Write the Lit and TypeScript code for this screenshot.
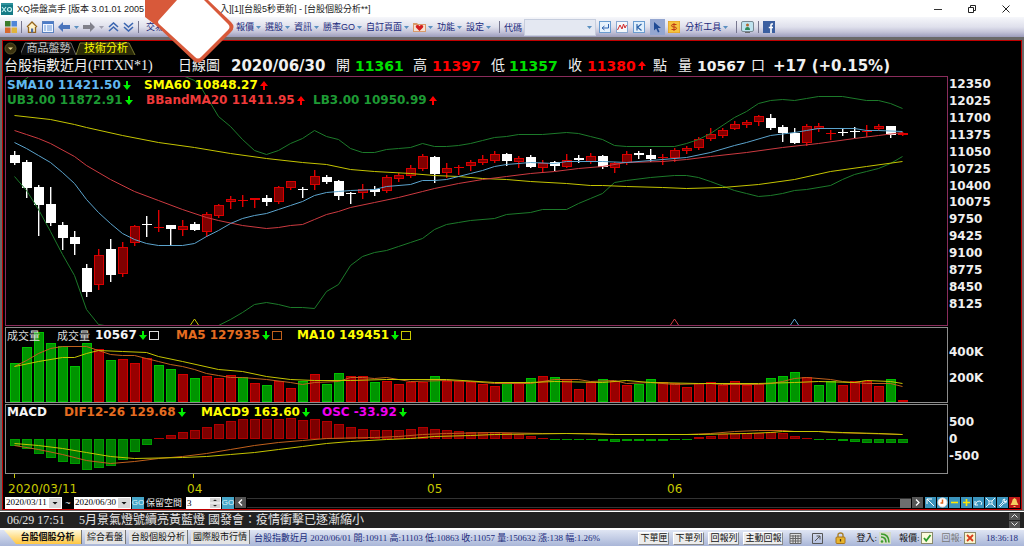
import { LitElement, html, svg, css } from "lit";
import { customElement, property } from "lit/decorators.js";

type Candle = [string, number, number, number, number];
type Bar = [string, number];
type Pt = [number, number];

const STEP = 12;
const mid = (i: number) => 9.5 + i * STEP;
const parsePts = (s: string): Pt[] => s.trim().split(/\s+/).map((p) => p.split(":").map(Number) as unknown as Pt);
const parseBars = (s: string): Bar[] => s.trim().split(/\s+/).map((p) => [p[0], Number(p.slice(1))] as Bar);

// colour, high, body top, body bottom, low
const CANDLES: Candle[] = `w75,79,87,88 w84,86,112,121 w109,111,129,159 w111,128,147,149 w146,149,162,173 w155,161,168,178
w188,192,216,220 r173,179,209,213 w163,173,199,205 r166,171,198,200 r149,150,167,169 w140,148,149,160 r134,151,152,155
w149,149,153,169 r144,150,154,159 w146,148,154,154 r136,138,156,160 r128,129,140,141 r120,123,126,132 r119,124,125,130
r122,122,124,131 w119,122,126,129 r110,111,126,127 r105,105,112,113 w111,113,114,121 r94,100,109,113 w99,101,106,107
w104,105,120,123 w116,117,118,127 r108,113,117,122 w110,113,116,119 r99,101,115,116 r97,99,103,105 r89,92,100,101
r78,80,93,94 w80,81,98,106 r87,92,97,101 r89,91,92,98 r84,86,90,94 r79,83,87,88 r75,78,85,86 w77,78,85,89 r80,82,86,91
w79,81,91,91 r84,87,92,96 w85,86,90,94 r78,84,91,91 w79,82,84,86 r77,80,86,87 w79,80,91,92 r86,87,92,96 r75,78,87,88
w75,77,79,82 w73,79,83,85 r78,81,82,88 r72,74,82,85 r70,72,75,77 r61,63,72,73 r52,58,63,64 r52,54,60,61 r45,48,53,53
r44,46,49,51 r39,40,46,49 w38,42,52,53 w49,51,57,65 w52,57,67,67 r48,50,67,69 r47,50,53,55 r54,57,58,63 w53,56,57,59
w51,55,56,61 r49,55,56,60 r48,50,53,54 w50,50,59,61 r56,57,59,59`
  .split(/\s+/)
  .map((s) => [s[0], ...s.slice(1).split(",").map(Number)] as Candle);

const SMA60 = parsePts("0:39 3:43 5:48 6:51 9:59 12:66 15:71 18:77 21:82 24:86 26:88 28:93 30:95 33:97 35:99 37:100 39:102 41:103 43:105 46:107 48:109 49:109 51:110 54:111 56:112 59:111 62:108 65:103 68:95 71:90 74:85");
const SMA20 = parsePts("0:54 1:58 2:62 3:67 5:80 6:89 8:103 10:115 12:124 14:133 16:141 17:144 19:149 21:152 22:151 23:149 24:148 25:143 26:138 27:135 28:131 30:126 32:121 34:115 35:112 37:107 39:103 41:100 43:97 45:95 47:92 49:90 51:86 54:85 56:83 58:80 61:76 64:71 67:67 70:62 72:59 74:56");
const SMA10 = parsePts("0:66 1:72 2:79 3:86 4:96 5:107 6:123 7:136 8:147 9:157 10:163 11:167 12:169 14:169 15:167 16:160 17:154 18:147 19:142 20:139 21:137 22:133 23:129 24:125 25:119 26:116 27:115 28:114 30:113 31:110 33:108 34:104 35:104 36:103 37:100 38:97 39:94 40:90 41:88 42:87 43:86 45:87 46:85 49:85 51:86 54:83 56:81 58:76 60:69 61:66 63:59 65:56 66:54 67:52 70:52 71:54 72:54 74:55");
const UPPER = parsePts("14.2:0 15:4 15.6:12 16.2:24 17:40 18:50 19:63 20:74 21:78 22:74 23:67 24:62 25:54 26:60 27:63 28:72 29:76 30:76 31:73 32:72 33:71 34:67 35:70 36:70 37:69 38:67 39:64 40:61 41:60 42:58 44:58 46:56 47:57 48:60 49:63 50:69 51:70 55:70 56:67 57:63 58:57 60:41 61:35 62:27 63:24 64:23 65:24 66:22 67:20 69:20 71:24 72:24 73:27 74:32");
const UPPER_LEFT = parsePts("0:11 1.2:0");
const LOWER = parsePts("0:100 1:114 2:133 3:155 4:178 5:199 6:233 7:248 7.5:249 17:249 18:243 19:236 20:228 21:226 22:228 23:231 24:231 25:232 26:215 27:208 28:189 29:180 30:176 31:174 32:170 33:166 34:162 35:153 36:148 37:146 38:144 40:142 41:138 43:136 44:133 46:133 47:127 48:122 49:117 50:106 51:104 53:101 55:99 56:99 57:101 58:105 60:114 61:117 62:120 63:119 64:117 65:114 66:113 68:109 69:103 70:98 71:95 72:92 73:87 74:80");

const VOLUME = parseBars("g36 g20 g5 g16 g19 g39 g16 r22 g33 r32 r36 r31 g38 g42 r47 g51 r49 r51 r48 g50 r56 g58 r54 r61 g54 r47 g57 g46 r49 r49 g55 r54 r57 r55 r55 g49 r54 r54 r55 r57 r59 g55 r56 g51 r49 g50 r52 r62 r55 g52 r54 r58 g57 g52 r55 r56 r60 r56 r55 r58 r54 r58 r57 g51 g49 g45 r50 g58 g54 r58 r54 r54 r59 g52 r73");
const VMA5 = parsePts("0:39 1:33 2:26 3:21 4:19 6:19 7:23 8:27 9:28 10:28 11:31 12:34 13:37 14:39 15:42 16:46 17:48 18:50 19:50 21:52 23:55 24:57 25:55 27:54 28:50 29:50 30:51 31:50 32:52 33:54 36:53 38:54 40:56 43:56 45:52 47:52 48:54 50:53 51:56 53:55 55:57 58:56 59:57 62:57 63:56 64:54 65:51 66:50 68:52 69:54 71:56 73:56 74:59");
const VMA10 = parsePts("0:39 2:34 4:30 5:30 6:26 7:23 9:24 11:25 12:29 14:34 17:42 19:44 21:49 23:52 25:53 28:53 31:52 36:52 40:55 43:55 45:54 49:55 51:53 53:55 57:56 62:56 65:55 67:54 70:55 71:53 73:54 74:56");

const OSC = parseBars("g42 g45 g50 g54 g58 g60 g66 g64 g62 g56 g48 g41 r34 r31 r28 r26 r23 r20 r17 r15 r15 r15 r15 r14 r16 r15 r17 r20 r23 r25 r26 r26 r26 r25 r23 r25 r26 r27 r28 r28 r28 r29 r30 r32 r34 g36 g36 g36 g36 g37 g38 g37 g37 g37 g37 g36 g36 r33 r32 r30 r29 r29 r29 r28 r29 r32 r34 g36 g36 g37 g38 g39 g39 g39 g39");
const DIF = parsePts("0:41 2:45 4:50 6:56 8:59 10:57 12:54 14:52 16:49 18:45 20:41 22:38 24:36 26:34 30:33 32:32 34:30 36:29 40:28 44:29 48:29 50:30 56:30 58:29 60:27 62:26 64:26 65:27 67:27 68:28 71:29 74:30");
const MACD9 = parsePts("0:39 2:41 4:44 6:48 8:52 10:54 14:53 16:52 18:50 20:48 22:45 24:42 26:39 28:37 31:35 33:34 35:32 38:31 40:30 46:29 50:30 57:30 61:29 63:28 64:27 67:27 69:28 72:29 74:30");

const line = (pts: Pt[], cls: string) =>
  svg`<polyline class="line ${cls}" points=${pts.map(([i, y]) => `${mid(i)},${y + 0.5}`).join(" ")}></polyline>`;

const down = (cls = "") => html`<svg class="arr ${cls}" width="8" height="9" viewBox="0 0 8 9"><path fill="#00f000" d="M3 0H5V4H8L4 9 0 4H3Z"/></svg>`;
const up = () => html`<svg class="arr" width="8" height="9" viewBox="0 0 8 9"><path fill="#ff0000" d="M3 9H5V5H8L4 0 0 5H3Z"/></svg>`;
const box = (c: string) => html`<svg class="box" width="10" height="9" viewBox="0 0 10 9"><rect x=".5" y=".5" width="9" height="8" fill="none" stroke=${c}/></svg>`;

@customElement("price-chart")
export class PriceChart extends LitElement {
  @property() kind = "price";

  static styles = css`
    :host { display: block; }
    .plot { display: block; width: 100%; height: 100%; }
    .line { fill: none; stroke-width: 1; }
    .yellow { stroke: #c4c400; }
    .red { stroke: #cc3a40; }
    .blue { stroke: #5ba3cc; }
    .green { stroke: #1c7a2a; }
    .orange { stroke: #c0601c; }
  `;

  private candle([c, hi, top, bot, lo]: Candle, i: number) {
    const x = 5 + i * STEP;
    const flat = bot - top < 3;
    return svg`
      <rect x=${x + 4} y=${hi} width="1" height=${lo - hi + 1} fill=${c === "w" ? "#fff" : "#e00000"}></rect>
      <rect x=${x + 5} y=${hi} width="1" height=${lo - hi + 1} fill=${c === "w" ? "#fff" : "#e00000"} opacity=".4"></rect>
      ${c === "w" || flat
        ? svg`<rect x=${x} y=${top} width="10" height=${Math.max(bot - top, 1)} fill=${c === "w" ? "#fff" : "#e00000"}></rect>`
        : svg`<rect x=${x + 0.5} y=${top + 0.5} width="9" height=${bot - top - 1} fill="#800000" stroke="#d80000"></rect>`}`;
  }

  private bar(c: string, i: number, y0: number, y1: number, dim: boolean) {
    const h = Math.abs(y1 - y0);
    const fill = c === "g" ? (dim ? "#007c00" : "#009400") : dim ? "#7c0000" : "#980000";
    const edge = c === "g" ? (dim ? "#009c00" : "#00c000") : dim ? "#b00000" : "#d00000";
    const x = 5 + i * STEP;
    const y = Math.min(y0, y1);
    return h < 3
      ? svg`<rect x=${x} y=${y} width="10" height=${h} fill=${edge}></rect>`
      : svg`<rect x=${x + 0.5} y=${y + 0.5} width="9" height=${h - 1} fill=${fill} stroke=${edge}></rect>`;
  }

  render() {
    if (this.kind === "volume")
      return html`<svg class="plot">${VOLUME.map(([c, y], i) => this.bar(c, i, y, 75, false))}${line(VMA5, "orange")}${line(VMA10, "yellow")}</svg>`;
    if (this.kind === "macd")
      return html`<svg class="plot">${OSC.map(([c, y], i) => this.bar(c, i, 35, y, true))}${line(DIF, "orange")}${line(MACD9, "yellow")}</svg>`;
    const mark = (i: number, cls: string) => svg`<path class="line ${cls}" d="M${mid(i) - 4} 249l4-6 4 6"></path>`;
    return html`<svg class="plot">
      ${CANDLES.map((c, i) => this.candle(c, i))}
      ${line(UPPER_LEFT, "green")}${line(UPPER, "green")}${line(LOWER, "green")}
      ${line(SMA60, "yellow")}${line(SMA20, "red")}${line(SMA10, "blue")}
      ${mark(15, "yellow")}${mark(55, "red")}${mark(65, "blue")}
    </svg>`;
  }
}

const caret = html`<svg class="caret" width="5" height="3" viewBox="0 0 5 3"><path fill="#5a8fc0" d="M0 0H5L2.5 3Z"/></svg>`;
const menu = (t: string) => html`<button class="menu">${t}${caret}</button>`;

@customElement("app-root")
export class AppRoot extends LitElement {
  static styles = css`
    :host { display: block; min-height: 100vh; background: #f4f4f4; font-family: "Liberation Sans", "Noto Sans CJK TC", sans-serif; font-size: 9px; }
    * { box-sizing: border-box; }
    button, select, input { font: inherit; color: inherit; margin: 0; padding: 0; border: 0; border-radius: 0; background: none; }
    button { display: inline-flex; align-items: center; justify-content: center; white-space: nowrap; }
    select { appearance: none; }
    svg { display: block; flex: none; }
    .page { position: relative; display: flex; flex-direction: column; overflow: hidden; }
    .splash { position: absolute; left: 144px; top: 0; }

    .title { display: flex; align-items: center; height: 17px; background: #fff; color: #222; padding-left: 1px; line-height: 16px; white-space: nowrap; }
    .title .name { margin-left: 4px; width: 203px; overflow: hidden; }
    .wins { margin-left: auto; display: flex; align-items: center; gap: 26px; padding-right: 14px; }

    .tools { display: flex; align-items: center; height: 20px; padding-left: 5px; color: #1c2a7c; background: linear-gradient(#f6f7fb, #dfe0ec 50%, #c3c3d8 75%, #9c9cbc); white-space: nowrap; }
    .quick { display: flex; align-items: center; gap: 4px; width: 141px; }
    .trade { width: 86px; justify-content: flex-start; }
    .menu { gap: 2px; margin-right: 4px; line-height: 16px; }
    .sep { width: 1px; height: 12px; background: #77778f; margin: 0 4px; }
    .code { width: 72px; height: 17px; background: #e4e8f2; border: 1px solid #c6cddd; }
    .combo { position: relative; display: flex; margin: 0 3px 0 2px; }
    .combo .caret { position: absolute; right: 4px; top: 7px; pointer-events: none; }
    .ibtn { width: 12px; height: 12px; margin-right: 5px; }
    .pick { width: 15px; height: 16px; background: #94a6d0; margin-right: 3px; }

    .shell { background: #696969; padding: 3px 2px 1px; }
    .frame { border: 1px solid #c00000; background: #000; color: #f0f0f0; }
    .tabs { display: flex; align-items: flex-end; height: 14px; font-size: 11px; }
    .round { width: 18px; }
    .tab { position: relative; height: 13px; line-height: 13px; color: #c8c8c8; width: 55px; }
    .tab.on { color: #ffff00; width: 60px; }
    .tab .shape { position: absolute; left: 0; top: 0; }
    .tab span { position: relative; }
    .head { display: grid; grid-template-columns: 174px 53px 105px 19px 58px 19px 59px 18px 59px 19px 51px 15px 25px 19px 54px 22px 1fr; align-items: center; height: 21px; padding-left: 1px; font-size: 14px; font-family: "Liberation Serif", "Noto Sans CJK TC", serif; white-space: nowrap; line-height: 20px; }
    .num { font-family: "DejaVu Sans", sans-serif; font-weight: 700; }
    .big { font-size: 15px; }
    .up { color: #ff0000; }
    .dn { color: #00e000; }
    .charts { display: grid; grid-template-columns: minmax(0, 1fr) 73px; row-gap: 1px; padding-left: 2px; }
    .pane { position: relative; outline: 1px solid #8c8c8c; outline-offset: -1px; overflow: hidden; }
    .pane.price { height: 250px; outline-color: #8a2c5c; }
    .pane.volume { height: 76px; }
    .pane.macd { height: 70px; }
    .pane price-chart { height: 100%; }
    .legend { position: absolute; left: 2px; top: 1px; display: grid; font: 700 12px/15px "DejaVu Sans", "Noto Sans CJK TC", sans-serif; white-space: nowrap; }
    .legend > span { display: flex; align-items: center; gap: 2px; }
    .legend .cjk { font: 400 11px/15px "Noto Sans CJK TC", sans-serif; color: #ddd; }
    .l1 { grid-template-columns: 137px 1fr; top: 2px; }
    .l2 { grid-template-columns: 139px 167px 1fr; top: 17px; }
    .l3 { grid-template-columns: 50px 38px 81px 121px 1fr; }
    .l4 { grid-template-columns: 57px 137px 121px 1fr; }
    .axis { display: flex; flex-direction: column; padding-left: 1px; font: 700 12px/16px "DejaVu Sans", sans-serif; }
    .axis.a1 { justify-content: space-between; padding-bottom: 14px; }
    .axis.a2 { padding-top: 17px; gap: 10px; }
    .axis.a3 { padding-top: 10px; gap: 1px; }
    .c-blue { color: #62b8f0; } .c-yellow { color: #ffff00; } .c-green { color: #1e9a34; } .c-red { color: #f03a3a; }
    .c-orange { color: #e46c20; } .c-mag { color: #f000f0; } .c-white { color: #f4f4f4; }
    .time { display: grid; grid-template-columns: 179px 240px 240px 1fr; height: 22px; padding-left: 5px; color: #c8c800; font: 12px/14px "DejaVu Sans", sans-serif; }
    .time span::before { content: ""; display: block; width: 1px; height: 4px; margin: 0 0 4px 6px; background: #c8c800; }

    .foot { display: flex; align-items: center; height: 13px; padding-left: 2px; }
    .date { position: relative; display: flex; }
    .date select { width: 57px; height: 12px; background: #fff; color: #000; font: 9px/11px "Liberation Serif", serif; padding-left: 1px; }
    .date .drop { position: absolute; right: 1px; top: 1px; pointer-events: none; }
    .tilde { width: 12px; text-align: center; line-height: 12px; }
    .go { width: 12px; height: 12px; background: #46a5c8; color: #dff2fa; font-size: 8px; margin-left: 1px; }
    .keep { font-size: 9px; line-height: 12px; margin-left: 2px; width: 40px; white-space: nowrap; }
    .spin { position: relative; display: flex; }
    .spin input { width: 35px; height: 12px; background: #fff; color: #000; font: 9px/10px "Liberation Serif", serif; padding-left: 1px; }
    .spin svg { position: absolute; right: 1px; top: 1px; pointer-events: none; }
    .nav { width: 11px; height: 11px; background: #555; margin-left: 1px; }
    .track { flex: 1; height: 10px; border-top: 1px solid #333; border-bottom: 1px solid #333; margin-left: 1px; display: flex; justify-content: flex-end; }
    .thumb { width: 11px; height: 9px; background: #6e6e6e; }
    .blue { width: 11px; height: 11px; background: #3b94bd; margin-left: 1px; }
    .first { margin-left: 2px; }
    .bell { background: #c01818; margin-right: 1px; }

    .news { display: flex; align-items: center; height: 17px; border-top: 1px solid #fff; background: #222; color: #e4e4e4; font: 12px/16px "Liberation Serif", "Noto Sans CJK TC", serif; padding: 0 4px 0 7px; }
    .news .when { width: 72px; }
    .news .updown { margin-left: auto; display: flex; flex-direction: column; gap: 1px; }
    .updown button { width: 11px; height: 7px; background: #555; }
    .status { display: flex; align-items: center; height: 18px; border-top: 2px solid #fff; background: linear-gradient(#dfe5f3, #a9b6d8); color: #1c2c7c; font: 9px/14px "Liberation Serif", "Noto Sans CJK TC", serif; white-space: nowrap; }
    .sheet { height: 14px; background: #e4e4e4; color: #111; padding: 0 2px; border-right: 1px solid #777; margin-right: 3px; align-self: flex-start; }
    .sheet.on { background: linear-gradient(#fff8d8, #ffc640); font-weight: 700; clip-path: polygon(0 0, 100% 0, 100% 100%, 12px 100%); width: 78px; margin-left: 4px; padding: 0 0 0 10px; }
    .info { margin-left: 1px; }
    .right { margin-left: auto; display: flex; align-items: center; padding-right: 6px; color: #111; }
    .push { height: 13px; padding: 0 1px; margin-right: 4px; background: #ececec; border: 1px solid #fff; border-right-color: #888; border-bottom-color: #888; }
    .cal { margin: 0 10px 0 2px; } .pop { margin-right: 12px; } .lock { margin-right: 10px; }
    .tag { margin-right: 2px; } .off { color: #777; }
    .sig { margin-right: 8px; }
    .clock { color: #1c2c7c; margin-left: 2px; }
  `;

  render() {
    const axis = Array.from({ length: 14 }, (_, i) => 12350 - i * 325);
    return html`<div class="page">
      <header class="title">
        <svg width="12" height="12" viewBox="0 0 12 12"><rect width="12" height="12" fill="#157a86"/><path d="M1 4l4 5M5 4L1 9" stroke="#bfeef0" stroke-width="1.2"/><circle cx="8.5" cy="6.5" r="2" fill="none" stroke="#bfeef0" stroke-width="1.2"/><path d="M0 1H12" stroke="#46a8b0"/></svg>
        <span class="name">XQ操盤高手 [版本 3.01.01 2005</span>
        <span>入][1][台股5秒更新] - [台股個股分析**]</span>
        <div class="wins">
          <button aria-label="Minimize"><svg width="8" height="8"><path d="M0 4.5H8" stroke="#333"/></svg></button>
          <button aria-label="Restore"><svg width="8" height="8" viewBox="0 0 8 8"><path d="M.5 2.5H5.5V7.5H.5ZM2.5 2V.5H7.5V5.5H6" fill="none" stroke="#222"/></svg></button>
          <button aria-label="Close"><svg width="8" height="8" viewBox="0 0 8 8"><path d="M.5.5l7 7M7.5.5l-7 7" stroke="#222"/></svg></button>
        </div>
      </header>

      <nav class="tools">
        <div class="quick">
          <svg width="12" height="12"><path fill="#3b7c2c" d="M0 0H5.500V5.500H0Z"/><path fill="#4f86d8" d="M6.500 0H12V5.500H6.500Z"/><path fill="#d8672c" d="M0 6.500H5.500V12H0Z"/><path fill="#e0b43c" d="M6.500 6.500H12V12H6.500Z"/></svg>
          <svg width="1" height="12"><rect width="1" height="12" fill="#77778f"/></svg>
          <svg width="12" height="12" viewBox="0 0 12 12"><path d="M1 6L6 1l5 5M2.500 6V11.500H9.500V6" fill="#fff3c8" stroke="#94641c" stroke-width="1.300"/><path d="M5 7.500H7.200V11.500H5Z" fill="#4b6aa8"/></svg>
          <svg width="12" height="12" viewBox="0 0 12 12"><rect x=".5" y=".5" width="11" height="11" fill="#eef4ff" stroke="#5a82c0"/><path d="M1 1H11V3H1Z" fill="#4b7cc8"/><path d="M5 5H10M5 7H10M5 9H10M2 5H4M2 7H4M2 9H4" stroke="#6a9ad8"/></svg>
          <svg width="12" height="10" viewBox="0 0 12 10"><path fill="#4a74bc" d="M0 5L5 0V3H12V7H5V10Z"/></svg>${caret}
          <svg width="12" height="10" viewBox="0 0 12 10"><path fill="#80808a" d="M12 5L7 0V3H0V7H7V10Z"/></svg>
          <svg width="5" height="3" viewBox="0 0 5 3"><path fill="#a0a0b0" d="M0 0H5L2.500 3Z"/></svg>
          <svg width="11" height="10" viewBox="0 0 11 10"><path d="M1 5l4.500-4L10 5M1 9l4.500-4L10 9" fill="none" stroke="#3b66b0" stroke-width="1.600"/></svg>
          <svg width="11" height="10" viewBox="0 0 11 10"><path d="M1 1l4.500 4L10 1M1 5l4.500 4L10 5" fill="none" stroke="#3b66b0" stroke-width="1.600"/></svg>
          <svg width="1" height="12"><rect width="1" height="12" fill="#77778f"/></svg>
        </div>
        <button class="menu trade">交易</button>
        ${menu("報價")}${menu("選股")}${menu("資訊")}${menu("勝率GO")}${menu("自訂頁面")}
        <button class="menu" aria-label="最愛"><svg width="13" height="12" viewBox="0 0 13 12"><path d="M0 2H4L5 3H13V11H0Z" fill="#d89a6a"/><path d="M1 4H12V10H1Z" fill="#f6e0d0"/><path d="M6.500 10L3 6.500Q2 4 4.500 4 6 4 6.500 5.200 7 4 8.500 4 11 4 10 6.500Z" fill="#d41c1c"/></svg>${caret}</button>
        ${menu("功能")}${menu("設定")}
        <i class="sep"></i>
        <label for="code">代碼</label>
        <span class="combo"><select id="code" class="code"><option></option></select>${caret}</span>
        <button class="ibtn" aria-label="Enter"><svg width="12" height="12" viewBox="0 0 12 12"><rect x=".5" y=".5" width="11" height="11" fill="#e6f1fc" stroke="#6a9cd0"/><path d="M9.500 3V7H3.500M5.500 5L3 7l2.500 2" fill="none" stroke="#2c62b0"/></svg></button>
        <button class="ibtn" aria-label="走勢"><svg width="12" height="12" viewBox="0 0 12 12"><rect x=".5" y=".5" width="11" height="11" fill="#f4f8fc" stroke="#8aa8d0"/><path d="M1.500 9L4 4l2 4 1.500-5L9 7l1.500-3" fill="none" stroke="#d02828"/></svg></button>
        <button class="ibtn" aria-label="K線"><svg width="12" height="12" viewBox="0 0 12 12"><rect x=".5" y=".5" width="11" height="11" fill="#e0effc" stroke="#6a9cd0"/><path d="M4 3V9.500M8.500 3L4.500 6.200l4 3.300" fill="none" stroke="#2c62a8" stroke-width="1.200"/></svg></button>
        <button class="pick" aria-label="游標"><svg width="8" height="11" viewBox="0 0 8 11"><path fill="#1f4a94" d="M0 0V8.500L2.200 6.500 4 10.500 5.500 9.800 3.800 6H7Z"/></svg></button>
        <button class="ibtn" aria-label="交易"><svg width="12" height="12" viewBox="0 0 12 12"><rect width="12" height="12" fill="#f4c440" stroke="#e0941c"/><path d="M8.500 3.500H5Q3.500 3.500 3.500 4.800 3.500 6 6 6t2.500 1.300Q8.500 8.500 7 8.500H3.500M6 2V10" fill="none" stroke="#c03c14"/></svg></button>
        ${menu("分析工具")}
        <i class="sep"></i>
        <svg width="13" height="12" viewBox="0 0 13 12"><rect x=".5" y=".5" width="12" height="10" rx="1.500" fill="#bfe4f0" stroke="#7a8a94"/><circle cx="6.500" cy="4" r="1.500" fill="#b0682c"/><path d="M4 9Q4 6 6.500 6T9 9Z" fill="#2c8a5c"/><path d="M4 11.500H9" stroke="#6a6a6a"/></svg>
        <i class="sep"></i>
        <a href="#" aria-label="Facebook"><svg width="12" height="12" viewBox="0 0 12 12"><rect width="12" height="12" fill="#3b5fa0"/><path d="M10 3H8.800Q8 3 8 4V12M5.800 6.500H10" fill="none" stroke="#fff" stroke-width="1.600"/></svg></a>
      </nav>

      <main class="shell"><div class="frame">
        <div class="tabs">
          <svg class="round" width="18" height="13" viewBox="-1 0 18 13"><circle cx="6.500" cy="6.500" r="5.500" fill="#3c3410" stroke="#5a5228"/><path d="M4 5.500H9L6.500 8Z" fill="#e8d890"/></svg>
          <button class="tab"><svg class="shape" width="55" height="13" viewBox="0 0 55 13"><path d="M-1 13L4 1H50L55 13" fill="#101010" stroke="#686868"/></svg><span>商品盤勢</span></button>
          <button class="tab on"><svg class="shape" width="60" height="13" viewBox="0 0 60 13"><path d="M0 13L4 1H53L59 13" fill="#2c2c08" stroke="#7a7a30"/></svg><span>技術分析</span></button>
        </div>
        <div class="head">
          <span>台股指數近月(FITXN*1)</span><span>日線圖</span><span class="num big">2020/06/30</span>
          <span>開</span><span class="num dn">11361</span><span>高</span><span class="num up">11397</span>
          <span>低</span><span class="num dn">11357</span><span>收</span><span class="num up">11380</span>${up()}
          <span>點</span><span>量</span><span class="num">10567</span><span>口</span><span class="num big">+17 (+0.15%)</span>
        </div>
        <div class="charts">
          <section class="pane price">
            <price-chart kind="price"></price-chart>
            <div class="legend l1"><span class="c-blue">SMA10 11421.50${down()}</span><span class="c-yellow">SMA60 10848.27${up()}</span></div>
            <div class="legend l2"><span class="c-green">UB3.00 11872.91${down()}</span><span class="c-red">BBandMA20 11411.95${up()}</span><span class="c-green">LB3.00 10950.99${up()}</span></div>
          </section>
          <div class="axis a1">${axis.map((v) => html`<span>${v}</span>`)}</div>
          <section class="pane volume">
            <price-chart kind="volume"></price-chart>
            <div class="legend l3"><span class="cjk">成交量</span><span class="cjk">成交量</span><span class="c-white">10567${down()}${box("#ddd")}</span><span class="c-orange">MA5 127935${down()}${box("#c0601c")}</span><span class="c-yellow">MA10 149451${down()}${box("#c8c800")}</span></div>
          </section>
          <div class="axis a2"><span>400K</span><span>200K</span></div>
          <section class="pane macd">
            <price-chart kind="macd"></price-chart>
            <div class="legend l4"><span class="c-white">MACD</span><span class="c-orange">DIF12-26 129.68${down()}</span><span class="c-yellow">MACD9 163.60${down()}</span><span class="c-mag">OSC -33.92${down()}</span></div>
          </section>
          <div class="axis a3"><span>500</span><span>0</span><span>-500</span></div>
        </div>
        <div class="time"><span>2020/03/11</span><span>04</span><span>05</span><span>06</span></div>
        <div class="foot">
          ${this.date("2020/03/11", "起始日期")}<span class="tilde">~</span>${this.date("2020/06/30", "結束日期")}
          <button class="go">GO</button>
          <label class="keep" for="keep">保留空間</label>
          <span class="spin"><input id="keep" type="text" inputmode="numeric" value="3"><svg width="10" height="10" viewBox="0 0 10 10"><path d="M0 0H10V4.500H0ZM0 5.500H10V10H0Z" fill="#d4d4d4"/><path d="M3 3L5 1.500 7 3ZM3 7L5 8.500 7 7Z" fill="#222"/></svg></span>
          <button class="go">GO</button>
          <button class="nav" aria-label="向左"><svg width="5" height="7" viewBox="0 0 5 7"><path d="M4 .5L1 3.500l3 3" fill="none" stroke="#fff" stroke-width="1.300"/></svg></button>
          <div class="track"><div class="thumb"></div></div>
          <button class="nav" aria-label="向右"><svg width="5" height="7" viewBox="0 0 5 7"><path d="M1 .5L4 3.500l-3 3" fill="none" stroke="#fff" stroke-width="1.300"/></svg></button>
          <button class="blue first" aria-label="游標"><svg width="9" height="9" viewBox="0 0 9 9"><path d="M1 6V1H6M1 1L8 8" fill="none" stroke="#fff"/></svg></button>
          <button class="blue" aria-label="時鐘"><svg width="11" height="11" viewBox="0 0 11 11"><circle cx="5.500" cy="5.500" r="4.500" fill="#fff" stroke="#f0e0d8"/><path d="M5.500 2.500V6H3.500" fill="none" stroke="#e0641c" stroke-width="1.500"/></svg></button>
          <button class="blue" aria-label="縮小"><svg width="9" height="9"><path d="M1 4.500H8" stroke="#ffe800" stroke-width="1.600"/></svg></button>
          <button class="blue" aria-label="放大"><svg width="9" height="9"><path d="M1 4.500H8M4.500 1V8" stroke="#ffe800" stroke-width="1.600"/></svg></button>
          <button class="blue" aria-label="復原"><svg width="9" height="9" viewBox="0 0 9 9"><path d="M1 3V7H4M1 7Q3 2 6 3T7 7" fill="none" stroke="#e8f6fc"/></svg></button>
          <button class="blue" aria-label="全螢幕"><svg width="9" height="9" viewBox="0 0 9 9"><path d="M0 0l3 3M9 0L6 3M0 9l3-3M9 9L6 6M3 3H6V6H3Z" fill="none" stroke="#e8f6fc"/></svg></button>
          <button class="blue" aria-label="設定"><svg width="9" height="9" viewBox="0 0 9 9"><path d="M1 8L5 4Q4 1 7 1L6 3 7 4 8.500 2.500Q9 5.500 6 5L2 9" fill="none" stroke="#e8f6fc"/></svg></button>
          <button class="blue bell" aria-label="警示"><svg width="9" height="9" viewBox="0 0 9 9"><path d="M4.500 0Q7 1 7 4L8.500 7H.5L2 4Q2 1 4.500 0ZM3.500 8H5.500V9H3.500Z" fill="#f4d060"/></svg></button>
        </div>
      </div></main>

      <div class="news"><span class="when">06/29 17:51</span><span>5月景氣燈號續亮黃藍燈 國發會：疫情衝擊已逐漸縮小</span>
        <div class="updown">
          <button aria-label="上一則"><svg width="7" height="4" viewBox="0 0 7 4"><path d="M.5 3.500l3-3 3 3" fill="none" stroke="#eee"/></svg></button>
          <button aria-label="下一則"><svg width="7" height="4" viewBox="0 0 7 4"><path d="M.5.5l3 3 3-3" fill="none" stroke="#eee"/></svg></button>
        </div></div>

      <footer class="status">
        <button class="sheet on">台股個股分析</button><button class="sheet">綜合看盤</button><button class="sheet">台股個股分析</button><button class="sheet">國際股市行情</button>
        <span class="info">台股指數近月 2020/06/01 開:10911 高:11103 低:10863 收:11057 量:150632 漲:138 幅:1.26%</span>
        <div class="right">
          <button class="push">下單匣</button><button class="push">下單列</button><button class="push">回報列</button><button class="push">主動回報</button>
          <svg class="cal" width="13" height="12" viewBox="0 0 13 12"><path d="M1 1.500H12V11.500H1ZM1 4H12M1 6.500H12M1 9H12M4 3V11M6.500 3V11M9 3V11" fill="#ddd" stroke="#666"/></svg>
          <svg class="pop" width="11" height="11" viewBox="0 0 11 11"><path d="M.5.5H10.500V10.500H.5ZM3 8L8 3M4.500 3H8V6.500" fill="none" stroke="#555"/></svg>
          <svg class="lock" width="11" height="12" viewBox="0 0 11 12"><path d="M3 6V3Q3 1 5.500 1T8 3V6" fill="none" stroke="#a8802c" stroke-width="1.400"/><rect x="1" y="5" width="9" height="6.500" rx="1" fill="#e8b42c" stroke="#a8741c"/><path d="M5.500 7V9.500" stroke="#503810" stroke-width="1.300"/></svg>
          <span class="tag">登入:</span>
          <svg class="sig" width="12" height="12" viewBox="0 0 12 12"><rect width="12" height="12" fill="#d4dcc8"/><path d="M2 5Q7 5 7 10.500M2 2Q10 2 10 10.500" fill="none" stroke="#3c9c2c" stroke-width="1.600"/><circle cx="3" cy="9.500" r="1.300" fill="#3c9c2c"/></svg>
          <span class="tag">報價:</span>
          <svg class="sig" width="12" height="12" viewBox="0 0 12 12"><rect x=".5" y=".5" width="11" height="11" fill="#fbfbdc" stroke="#8a8a6a"/><path d="M3 6l2.200 2.800L9.500 3" fill="none" stroke="#2c9a2c" stroke-width="1.800"/></svg>
          <span class="tag off">回報:</span>
          <svg class="sig" width="12" height="12" viewBox="0 0 12 12"><rect x=".5" y=".5" width="11" height="11" fill="#fbf4cc" stroke="#8a8a6a"/><path d="M3 3l6 6M9 3L3 9" stroke="#d83c1c" stroke-width="1.800"/></svg>
          <span class="clock">18:36:18</span>
        </div>
      </footer>

      <svg class="splash" width="92" height="65" viewBox="144 0 92 65"><path fill="#d8593a" d="M145 0H208L231 22Q236 27 231 32L203 60Q199 65 194 61L157 26 145 17Z"/><path fill="#fff" d="M177 0H204L228 24Q231 27 228 30L201 57Q198 60 195 57L159 24Q157 22 159 20Z"/></svg>
    </div>`;
  }

  private date(v: string, label: string) {
    return html`<span class="date"><select aria-label=${label}><option>${v}</option></select><svg class="drop" width="12" height="10" viewBox="0 0 12 10"><rect width="12" height="10" fill="#d8d8d8"/><path d="M3.500 4H8.500L6 6.500Z" fill="#111"/></svg></span>`;
  }
}
